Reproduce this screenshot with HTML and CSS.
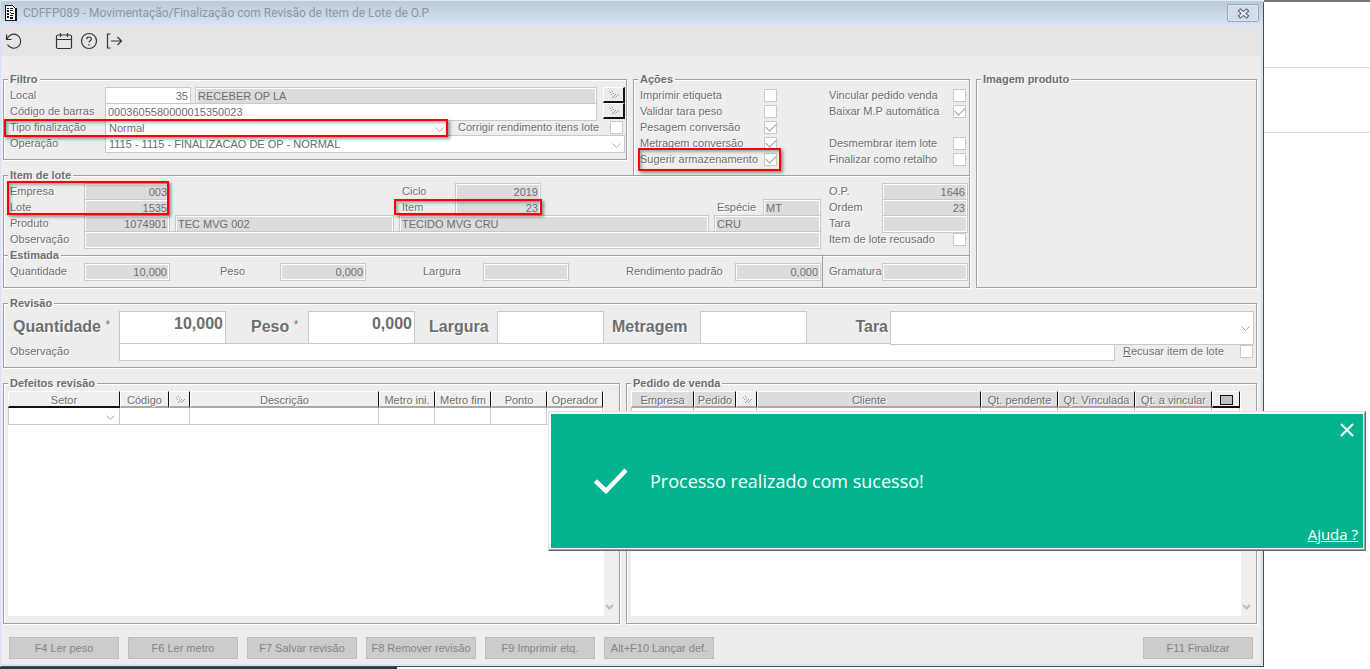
FILE: index.html
```html
<!DOCTYPE html>
<html lang="pt-BR">
<head>
<meta charset="utf-8">
<title>CDFFP089 - Movimentação/Finalização</title>
<link rel="stylesheet" href="styles.css">
</head>
<body>
<svg class="symbols" aria-hidden="true">
  <symbol id="chevron" viewBox="0 0 9 5"><path d="M.5.5l4 4 4-4" fill="none" stroke="#a8a8a8"/></symbol>
  <symbol id="lookup" viewBox="0 0 10 8" shape-rendering="crispEdges"><path d="M1 1h1v1H1zM3 0h1v1H3zM2 3h1v1H2zM4 2h1v1H4zM6 3h1v1H6zM5 4h1v1H5zM4 5h1v1H4zM3 6h1v1H3zM9 3h1v1H9zM8 4h1v1H8zM7 5h1v1H7zM6 6h1v1H6z" fill="#9c9c9c"/></symbol>
</svg>
<div class="desktop">
  <main class="window">
    <header class="titlebar">
      <svg class="appicon" width="12" height="16" viewBox="0 0 12 16" shape-rendering="crispEdges"><path d="M0 0h9v1h1v1h1v1h1v13H0z" fill="#fff"/><path d="M0 0h1v15H0zM0 0h8v1H0zM8 1h1v1H8zM9 2h1v1H9zM10 3h2v13h-2zM0 15h12v1H0zM2 3h2v1H2zM5 3h3v1H5zM2 5h2v2H2zM5 5h3v1H5zM2 8h2v2H2zM5 7h1v1H5zM6 8h3v1H6zM5 10h3v1H5zM2 11h2v2H2zM5 12h3v2H5z" fill="#161616"/></svg>
      <h1>CDFFP089 - Movimentação/Finalização com Revisão de Item de Lote de O.P</h1>
      <button class="close" aria-label="Fechar"><svg width="13" height="11" viewBox="0 0 13 11"><path d="M3.500 3l6 5M9.500 3l-6 5" stroke="#4d5566" stroke-width="4" stroke-linecap="square"/><path d="M3.500 3l6 5M9.500 3l-6 5" stroke="#f2f2f2" stroke-width="2" stroke-linecap="square"/></svg></button>
    </header>
    <nav class="toolbar">
      <button aria-label="Desfazer"><svg viewBox="0 0 18 18"><path d="M1.500 2.500v5h5M2 7.200A7 7 0 1 1 2.500 12.500"/></svg></button>
      <button class="second" aria-label="Calendário"><svg viewBox="0 0 18 18"><path d="M3 3h12q1.500 0 1.500 1.500v10.500q0 1.500-1.500 1.500h-12q-1.500 0-1.500-1.500v-10.500q0-1.500 1.500-1.500zM1.500 7.500h15M5.500 1v4M12.500 1v4"/></svg></button>
      <button aria-label="Ajuda"><svg viewBox="0 0 18 18"><circle cx="9" cy="9" r="7.500"/><path d="M6.700 7.200q0-2.200 2.300-2.200t2.300 2q0 1.200-1.300 1.900-1 .6-1 1.700M9 12v1.500"/></svg></button>
      <button aria-label="Sair"><svg viewBox="0 0 18 18"><path d="M5.500 2h-3v14h3M6 9h10.500M12.500 5l4 4-4 4"/></svg></button>
    </nav>

    <form class="content">
      <div class="top">
        <div class="left">
          <div class="pair">
            <fieldset class="filter">
              <legend>Filtro</legend>
              <div class="row"><label class="cap" for="local">Local</label><input id="local" class="field num w86" value="35"><input class="field ro grow after" aria-label="Descrição do local" value="RECEBER OP LA" readonly><button type="button" class="lookup" aria-label="Buscar local"><svg width="10" height="8"><use href="#lookup"/></svg></button></div>
              <div class="row"><label class="cap" for="barras">Código de barras</label><input id="barras" class="field grow" value="0003605580000015350023"><button type="button" class="lookup" aria-label="Buscar código"><svg width="10" height="8"><use href="#lookup"/></svg></button></div>
              <div class="row marked"><label class="cap" for="tipo">Tipo finalização</label><span class="combo grow"><select id="tipo" class="field"><option>Normal</option></select><svg width="9" height="5"><use href="#chevron"/></svg></span><label class="check fix">Corrigir rendimento itens lote<input type="checkbox"></label><span class="mark mark-tipo"></span></div>
              <div class="row"><label class="cap" for="oper">Operação</label><span class="combo grow"><select id="oper" class="field"><option>1115 - 1115 - FINALIZACAO DE OP - NORMAL</option></select><svg width="9" height="5"><use href="#chevron"/></svg></span></div>
            </fieldset>
            <fieldset class="actions">
              <legend>Ações</legend>
              <div class="checks">
                <div>
                  <label class="check">Imprimir etiqueta<input type="checkbox"></label>
                  <label class="check">Validar tara peso<input type="checkbox"></label>
                  <label class="check">Pesagem conversão<input type="checkbox" checked></label>
                  <label class="check">Metragem conversão<input type="checkbox" checked></label>
                  <label class="check marked">Sugerir armazenamento<input type="checkbox" checked><span class="mark mark-sugerir"></span></label>
                </div>
                <div>
                  <label class="check">Vincular pedido venda<input type="checkbox"></label>
                  <label class="check spaced">Baixar M.P automática<input type="checkbox" checked></label>
                  <label class="check">Desmembrar item lote<input type="checkbox"></label>
                  <label class="check">Finalizar como retalho<input type="checkbox"></label>
                </div>
              </div>
            </fieldset>
          </div>
          <fieldset class="item">
            <legend>Item de lote</legend>
            <div class="lot marked">
              <label for="empresa">Empresa</label><input id="empresa" class="field ro num" value="003" readonly>
              <label class="c-mid" for="ciclo">Ciclo</label><input id="ciclo" class="field ro num c-midf" value="2019" readonly>
              <label class="c-end" for="op">O.P.</label><input id="op" class="field ro num c-endf" value="1646" readonly>
              <label class="c-first" for="lote">Lote</label><input id="lote" class="field ro num" value="1535" readonly>
              <label class="c-mid" for="item">Item</label><input id="item" class="field ro num c-midf" value="23" readonly>
              <label class="c-unit" for="especie">Espécie</label><input id="especie" class="field ro c-unitf" value="MT" readonly>
              <label class="c-end" for="ordem">Ordem</label><input id="ordem" class="field ro num c-endf" value="23" readonly>
              <label class="c-first" for="produto">Produto</label><input id="produto" class="field ro num" value="1074901" readonly>
              <input class="field ro c-p1" aria-label="Referência" value="TEC MVG 002" readonly>
              <input class="field ro c-p2" aria-label="Descrição do produto" value="TECIDO MVG CRU" readonly>
              <input class="field ro c-p3" aria-label="Cor" value="CRU" readonly>
              <label class="c-end" for="tara">Tara</label><input id="tara" class="field ro num c-endf" readonly>
              <label class="c-first" for="obs1">Observação</label><input id="obs1" class="field ro c-obs" readonly>
              <label class="check c-rec">Item de lote recusado<input type="checkbox"></label>
              <span class="mark mark-lote"></span>
              <span class="mark mark-item"></span>
            </div>
            <fieldset class="est">
              <legend>Estimada</legend>
              <div class="estrow">
                <div class="est-main">
                  <label for="eq">Quantidade</label><input id="eq" class="field ro num" value="10,000" readonly><i></i>
                  <label for="ep">Peso</label><input id="ep" class="field ro num" value="0,000" readonly><i></i>
                  <label for="el">Largura</label><input id="el" class="field ro num" readonly><i></i>
                  <label for="er">Rendimento padrão</label><input id="er" class="field ro num" value="0,000" readonly>
                </div>
                <div class="est-side"><label for="eg">Gramatura</label><input id="eg" class="field ro num" readonly></div>
              </div>
            </fieldset>
          </fieldset>
        </div>
        <fieldset class="image"><legend>Imagem produto</legend></fieldset>
      </div>

      <fieldset class="review">
        <legend>Revisão</legend>
        <div class="big">
          <label class="start" for="rq">Quantidade <small>*</small></label><input id="rq" class="field" value="10,000">
          <label for="rp">Peso <small>*</small></label><input id="rp" class="field" value="0,000">
          <label class="tight" for="rl">Largura</label><input id="rl" class="field">
          <label class="near" for="rm">Metragem</label><input id="rm" class="field">
          <label class="end" for="rt">Tara</label><span class="combo"><select id="rt" class="field"><option></option></select><svg width="9" height="5"><use href="#chevron"/></svg></span>
        </div>
        <div class="row"><label class="cap wide" for="obs2">Observação</label><input id="obs2" class="field grow"><label class="check refuse"><span><u>R</u>ecusar item de lote</span><input type="checkbox"></label></div>
      </fieldset>

      <div class="lists">
        <fieldset class="list">
          <legend>Defeitos revisão</legend>
          <div class="scroll">
            <div class="sheet">
              <table>
                <colgroup><col class="w112"><col class="w49"><col class="w21"><col><col class="w56"><col class="w56"><col class="w56"><col class="w56"></colgroup>
                <thead><tr><th class="active">Setor</th><th>Código</th><th><svg width="10" height="8"><use href="#lookup"/></svg></th><th>Descrição</th><th>Metro ini.</th><th>Metro fim</th><th>Ponto</th><th>Operador</th></tr></thead>
                <tbody><tr><td class="drop"><svg width="9" height="5"><use href="#chevron"/></svg></td><td colspan="2"></td><td></td><td></td><td></td><td></td><td></td></tr></tbody>
              </table>
            </div>
            <div class="bar"><svg width="9" height="7" viewBox="0 0 9 7"><path d="M1 1l3.500 3.500L8 1" fill="none" stroke="#bdbdbd" stroke-width="2"/></svg></div>
          </div>
        </fieldset>
        <fieldset class="list dim">
          <legend>Pedido de venda</legend>
          <div class="scroll">
            <div class="sheet">
              <table>
                <colgroup><col class="w63"><col class="w42"><col class="w21"><col><col class="w77"><col class="w77"><col class="w77"><col class="w28"></colgroup>
                <thead><tr><th>Empresa</th><th>Pedido</th><th class="light"><svg width="10" height="8"><use href="#lookup"/></svg></th><th>Cliente</th><th>Qt. pendente</th><th>Qt. Vinculada</th><th>Qt. a vincular</th><th class="light active"><span class="box"></span></th></tr></thead>
                <tbody><tr><td></td><td colspan="2"></td><td></td><td></td><td></td><td></td><td></td></tr></tbody>
              </table>
            </div>
            <div class="bar"><svg width="9" height="7" viewBox="0 0 9 7"><path d="M1 1l3.500 3.500L8 1" fill="none" stroke="#bdbdbd" stroke-width="2"/></svg></div>
          </div>
        </fieldset>
      </div>

      <footer class="buttons">
        <button type="button">F4 Ler peso</button>
        <button type="button">F6 Ler metro</button>
        <button type="button">F7 Salvar revisão</button>
        <button type="button">F8 Remover revisão</button>
        <button type="button">F9 Imprimir etq.</button>
        <button type="button">Alt+F10 Lançar def.</button>
        <button type="button" class="last">F11 Finalizar</button>
      </footer>
    </form>
  </main>
  <aside class="behind"><div></div><div></div></aside>
</div>
<div class="taskstrip"><div></div></div>

<section class="toast" role="status">
  <button class="toast-close" aria-label="Fechar aviso"><svg width="14" height="14" viewBox="0 0 14 14"><path d="M1 1l12 12M13 1L1 13" stroke="#fff" stroke-width="2"/></svg></button>
  <div class="toast-body"><svg width="34" height="26" viewBox="0 0 34 26"><path d="M1.500 13l10.500 10L32 2" fill="none" stroke="#fff" stroke-width="4.500"/></svg><p>Processo realizado com sucesso!</p></div>
  <a href="#ajuda">Ajuda ?</a>
</section>
</body>
</html>
```

FILE: styles.css
```css
* { box-sizing: border-box; }
body {
  margin: 0;
  height: 100vh;
  display: flex;
  flex-direction: column;
  background: #fff;
  color: #6d6d6d;
  font: 11px/16px "Liberation Sans", Arial, sans-serif;
}
input, select, button { font: inherit; color: inherit; margin: 0; border-radius: 0; }
svg { display: block; }
.symbols { position: absolute; width: 0; height: 0; }

.desktop { flex: 1; display: flex; min-height: 0; }
.window {
  flex: 1;
  min-width: 0;
  display: flex;
  flex-direction: column;
  background: #ededed;
  border-left: 1px solid #d5e3f3;
  border-right: 1px solid #4a4a4f;
  border-bottom: 1px solid #4a4a4f;
  border-top-right-radius: 4px;
  box-shadow: inset -2px -2px 0 #d8e3f2;
}
.behind { width: 106px; border-top: 2px solid #777; }
.behind div { height: 65px; border-bottom: 1px solid #dcdcdc; }
.behind div:first-child { height: 66px; }
.taskstrip { height: 2px; }
.taskstrip div { width: 29%; height: 2px; background: #2c3a3d; }

.titlebar {
  height: 25px;
  display: flex;
  align-items: center;
  padding: 0 4px 0 4px;
  background: linear-gradient(#bccad8, #d7e4f3);
  border-top: 1px solid #e4e8ec;
}
.titlebar h1 {
  flex: 1;
  margin: 0 0 0 6px;
  font: 12px/16px Roboto, "Open Sans", sans-serif;
  color: #8d959e;
}
.close {
  width: 32px;
  height: 18px;
  padding: 0;
  display: grid;
  place-items: center;
  background: #cfdceb;
  border: 1px solid #98a4b2;
  border-radius: 2px;
  box-shadow: inset 0 0 0 1px #dfe9f4;
}
.toolbar {
  height: 31px;
  display: flex;
  align-items: center;
  gap: 7px;
  padding: 3px 4px 2px;
  margin-right: 2px;
  background: #e5e5e5;
}
.toolbar button { width: 18px; height: 18px; padding: 0; border: 0; background: none; }
.toolbar .second { margin-left: 25px; }
.toolbar svg { width: 18px; height: 18px; fill: none; stroke: #333; stroke-width: 1.2; }

.content {
  flex: 1;
  min-height: 0;
  display: flex;
  flex-direction: column;
  gap: 7px;
  padding: 15px 6px 7px 2px;
}
fieldset {
  margin: 0;
  padding: 0;
  min-width: 0;
  border: 1px solid #a0a0a0;
  box-shadow: 1px 1px 0 #fff, inset 1px 1px 0 #fff;
}
legend {
  margin-left: 4px;
  padding: 0 2px;
  background: #ededed;
  font-weight: bold;
  text-shadow: 1px 1px 0 #fff;
}
.filter > legend, .actions > legend, .review > legend { margin-left: -2px; }
.list > legend { margin-left: 0; }
label { white-space: nowrap; text-shadow: 1px 1px 0 #fff; }

.top { display: grid; grid-template-columns: 967fr 281fr; gap: 6px; }
.pair { display: grid; grid-template-columns: 624fr 337fr; gap: 6px; align-items: start; }
.filter { padding: 0 1px 8px 6px; }
.actions { padding: 0 3px 8px 6px; }
.item { margin-top: -9px; }
.row { display: flex; height: 16px; }
.cap { width: 95px; flex: none; }
.cap.wide { width: 109px; }
.grow { flex: 1; min-width: 0; }
.marked { position: relative; }
.field {
  height: 18px;
  min-width: 0;
  padding: 0 2px 1px;
  border: 1px solid #c8c8c8;
  background: #fff;
  outline: 0;
}
.ro { background: #dcdcdc; box-shadow: inset 0 0 0 1px #fff; }
.num { text-align: right; }
.w86 { width: 86px; }
.after { margin-left: 4px; }
.lookup {
  width: 22px;
  height: 16px;
  margin-left: 6px;
  padding: 0;
  display: grid;
  place-items: center;
  background: #ececec;
  border: 1px solid #fff;
  border-right: 2px solid #111;
  border-bottom: 2px solid #111;
}
.combo { position: relative; display: block; height: 18px; }
.combo select { width: 100%; height: 100%; padding: 0 3px 3px; appearance: none; }
.combo svg { position: absolute; right: 4px; bottom: 5px; pointer-events: none; }
.check { display: flex; height: 16px; justify-content: space-between; align-items: center; }
.check.fix { width: 177px; padding: 0 2px 0 10px; }
.check input {
  appearance: none;
  flex: none;
  width: 13px;
  height: 13px;
  display: grid;
  place-items: center;
  border: 1px solid #c8c8c8;
  background: #fff;
}
.check input:checked::after {
  content: "";
  width: 9px;
  height: 5px;
  border-left: 1px solid #a0a0a0;
  border-bottom: 1px solid #a0a0a0;
  transform: translateY(-1px) rotate(-45deg);
}
.checks { display: flex; justify-content: space-between; }
.checks > div { width: 137px; }
.spaced { margin-bottom: 16px; }

.mark {
  position: absolute;
  border: 2px solid #f00;
  box-shadow: 2px 2px 3px rgba(0, 0, 0, .4), inset 2px 2px 3px rgba(0, 0, 0, .3);
  pointer-events: none;
  z-index: 2;
}
.mark-tipo { left: -6px; right: 177px; top: 0; height: 18px; }
.mark-sugerir { left: -2px; right: -4px; top: -3px; height: 23px; }
.mark-lote { left: 3px; width: 162px; top: -2px; height: 34px; }
.mark-item { left: 390px; width: 148px; top: 16px; height: 16px; }

.lot {
  display: grid;
  grid-template-columns: 74px 86px 5px 219fr 5px 56px 86px 168fr 5px 49px 58px 8px 53px 86px;
  grid-auto-rows: 16px;
  padding: 0 1px 0 6px;
}
.c-first { grid-column: 1; }
.c-mid { grid-column: 6; padding-left: 3px; }
.c-midf { grid-column: 7; }
.c-unit { grid-column: 10; padding-left: 3px; }
.c-unitf { grid-column: 11; }
.c-end { grid-column: 13; }
.c-endf { grid-column: 14; }
.c-p1 { grid-column: 4; }
.c-p2 { grid-column: 6 / 9; }
.c-p3 { grid-column: 10 / 12; }
.c-obs { grid-column: 2 / 12; }
.c-rec { grid-column: 13 / 15; padding-right: 2px; }
.est { border-width: 1px 0 0; box-shadow: inset 0 1px 0 #fff; }
.estrow { display: flex; height: 24px; }
.est-main {
  flex: 1;
  display: grid;
  grid-template-columns: 74px 86px 50fr 60px 86px 57fr 60px 86px 57fr 109px 86px;
  padding: 0 1px 0 6px;
}
.est-side {
  display: grid;
  grid-template-columns: 53px 86px;
  margin-top: -8px;
  padding: 8px 1px 0 6px;
  border-left: 1px solid #a0a0a0;
}

.review { padding: 0 2px 8px 6px; }
.big {
  display: grid;
  grid-template-columns: 109px 107px 82px 107px 82px 107px 96px 107px 83px 1fr;
  height: 32px;
  font-size: 16px;
  font-weight: bold;
}
.big label { line-height: 32px; padding-left: 25px; }
.big .start { padding-left: 3px; }
.big .tight { padding-left: 14px; }
.big .near { padding-left: 8px; }
.big .end { padding: 0 2px 0 0; text-align: right; }
.big small { font-size: 12px; line-height: 12px; font-weight: normal; vertical-align: 3px; }
.big input { height: 33px; padding: 0 2px 8px; text-align: right; }
.big .combo { height: 34px; }
.big .combo svg { bottom: 14px; }
.refuse { width: 139px; padding: 0 1px 0 8px; }

.lists { flex: 1; min-height: 0; display: grid; grid-template-columns: 617fr 631fr; gap: 6px; }
.list { display: flex; flex-direction: column; padding: 0 2px 7px 4px; }
.scroll { flex: 1; display: flex; }
.sheet { flex: 1; min-width: 0; background: #fff; }
.bar { width: 13px; flex: none; padding: 0 0 5px 1px; display: flex; align-items: flex-end; background: #efefef; }
table { width: calc(100% - 1px); table-layout: fixed; border-collapse: separate; border-spacing: 0; }
th {
  height: 17px;
  padding: 2px 0 0;
  font-weight: normal;
  line-height: 12px;
  white-space: nowrap;
  background: #efefef;
  border: 1px solid #fff;
  border-right: 1px solid #111;
  border-bottom: 2px solid #a8a8a8;
  text-shadow: 1px 1px 0 #fff;
}
th svg { margin: auto; }
.dim th { background: #dcdcdc; }
.dim th.light { background: #efefef; }
th.active, .dim th.active { border-bottom-color: #111; }
td { height: 17px; padding: 0; border-right: 1px solid #c8c8c8; border-bottom: 1px solid #c8c8c8; }
td:first-child { border-left: 1px solid #c8c8c8; }
.drop svg { margin: 3px 4px 0 auto; }
.box { display: block; width: 13px; height: 10px; margin: auto; border: 1px solid #111; background: #c0c0c0; }
.w21 { width: 21px; } .w28 { width: 28px; } .w42 { width: 42px; }
.w49 { width: 49px; } .w56 { width: 56px; } .w63 { width: 63px; }
.w77 { width: 77px; } .w112 { width: 112px; }

.buttons { display: flex; gap: 9px; padding: 6px 4px 0 6px; }
.buttons button {
  width: 110px;
  height: 22px;
  padding: 0;
  white-space: nowrap;
  background: #ccc;
  border: 1px solid #bdbdbd;
  color: #848484;
}
.buttons .last { margin-left: auto; }

.toast {
  position: fixed;
  left: 40%;
  right: 4px;
  top: 411px;
  height: 140px;
  display: flex;
  flex-direction: column;
  justify-content: space-between;
  padding: 8px 4px 3px 5px;
  background: #03b28f;
  border: 1px solid #e3e3e3;
  border-right-color: #696969;
  border-bottom-color: #696969;
  box-shadow: inset -1px -1px 0 #a0a0a0, inset 2px 2px 0 #fff, inset -2px -2px 0 #f0f0f0;
  color: #fff;
  font-family: "Open Sans", "Noto Sans", sans-serif;
  z-index: 5;
}
.toast { padding: 11px 7px 6px; }
.toast-close { align-self: flex-end; margin-right: 4px; padding: 0; border: 0; background: none; }
.toast-body { display: flex; align-items: center; gap: 22px; padding-left: 38px; }
.toast p { margin: 0; font-size: 18px; line-height: 26px; }
.toast a { align-self: flex-end; color: #fff; font-size: 15px; line-height: 20px; }
```
